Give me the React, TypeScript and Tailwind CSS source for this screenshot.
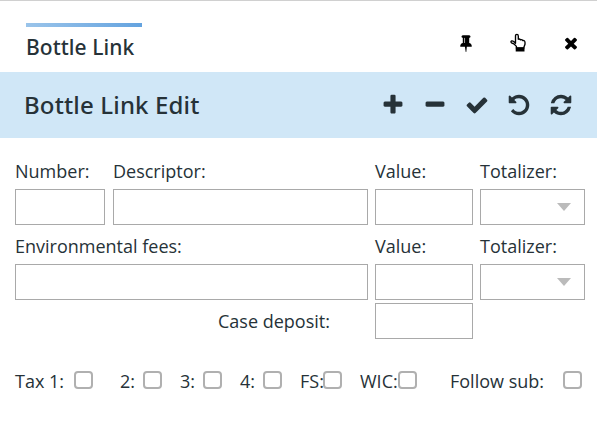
const paths = {
  tack: "M800 864v-448q0-14-9-23t-23-9-23 9-9 23v448q0 14 9 23t23 9 23-9 9-23zm672 352q0 26-19 45t-45 19h-429l-51 483q-2 12-10.500 20.500t-20.500 8.500h-1q-27 0-32-27l-76-485h-404q-26 0-45-19t-19-45q0-123 78.500-221.500t177.500-98.500v-512q-52 0-90-38t-38-90 38-90 90-38h640q52 0 90 38t38 90-38 90-90 38v512q99 0 177.500 98.500t78.500 221.500z",
  times: "M1490 1322q0 40-28 68l-136 136q-28 28-68 28t-68-28l-294-294-294 294q-28 28-68 28t-68-28l-136-136q-28-28-28-68t28-68l294-294-294-294q-28-28-28-68t28-68l136-136q28-28 68-28t68 28l294 294 294-294q28-28 68-28t68 28l136 136q28 28 28 68t-28 68l-294 294 294 294q28 28 28 68z",
  plus: "M1600 736v192q0 40-28 68t-68 28h-416v416q0 40-28 68t-68 28h-192q-40 0-68-28t-28-68v-416h-416q-40 0-68-28t-28-68v-192q0-40 28-68t68-28h416v-416q0-40 28-68t68-28h192q40 0 68 28t28 68v416h416q40 0 68 28t28 68z",
  minus: "M1600 736v192q0 40-28 68t-68 28h-1216q-40 0-68-28t-28-68v-192q0-40 28-68t68-28h1216q40 0 68 28t28 68z",
  check: "M1671 566q0 40-28 68l-724 724-136 136q-28 28-68 28t-68-28l-136-136-362-362q-28-28-28-68t28-68l136-136q28-28 68-28t68 28l294 295 656-657q28-28 68-28t68 28l136 136q28 28 28 68z",
  undo: "M1664 896q0 156-61 298t-164 245-245 164-298 61q-172 0-327-72.500t-264-204.500q-7-10-6.500-22.500t8.500-20.500l137-138q10-9 25-9 16 2 23 12 73 95 179 147t225 52q104 0 198.500-40.500t163.500-109.500 109.500-163.500 40.500-198.500-40.500-198.500-109.500-163.500-163.500-109.500-198.500-40.500q-98 0-188 35.500t-160 101.500l137 138q31 30 14 69-17 40-59 40h-448q-26 0-45-19t-19-45v-448q0-42 40-59 39-17 69 14l130 129q107-101 244.500-156.500t284.500-55.500q156 0 298 61t245 164 164 245 61 298z",
  refresh: "M1639 1056q0 5-1 7-64 268-268 434.500t-478 166.500q-146 0-282.500-55t-243.500-157l-129 129q-19 19-45 19t-45-19-19-45v-448q0-26 19-45t45-19h448q26 0 45 19t19 45-19 45l-137 137q71 66 161 102t187 36q134 0 250-65t186-179q11-17 53-117 8-23 30-23h192q13 0 22.500 9.500t9.500 22.500zm25-800v448q0 26-19 45t-45 19h-448q-26 0-45-19t-19-45 19-45l138-138q-148-137-349-137-134 0-250 65t-186 179q-11 17-53 117-8 23-30 23h-199q-13 0-22.500-9.500t-9.500-22.500v-7q65-268 270-434.500t480-166.500q146 0 284 55.500t245 156.500l130-129q19-19 45-19t45 19 19 45z",
};

function Icon({ name, className }: { name: keyof typeof paths; className: string }) {
  return (
    <svg viewBox="0 0 1792 1792" fill="currentColor" className={className}>
      <path d={paths[name]} />
    </svg>
  );
}

// Pointing hand with a solid cuff
function HandIcon() {
  return (
    <svg viewBox="0 0 18 18" className="size-[18px] overflow-visible" fill="none" stroke="currentColor" strokeWidth="1.35" strokeLinejoin="round" strokeLinecap="round">
      <path d="M6.500 9.300V1.900Q6.500 .4 7.900 .4T9.300 1.900V5.200Q10.600 4.700 11.500 5.800Q12.900 5.300 13.800 6.500Q16 6.200 16 8.600V10.200L14.900 13.200V14H7.400V12.400L5.300 10.200L2.500 8.900Q1.400 7.700 2.500 7Q3.500 6.600 4.700 7.600L6.500 8.900" />
      <path d="M6.700 13.500h8.800v4H6.700z" fill="currentColor" stroke="none" />
    </svg>
  );
}

function Box({ label }: { label: string }) {
  return (
    <div className="flex flex-col">
      <span className="h-[30px] whitespace-nowrap leading-[24px]">{label}</span>
      <div className="h-9 border border-[#a9a9a9]" />
    </div>
  );
}

function Select({ label }: { label: string }) {
  return (
    <div className="flex flex-col">
      <span className="h-[30px] whitespace-nowrap leading-[24px]">{label}</span>
      <div className="flex h-9 items-center justify-end border border-[#a9a9a9] pr-[13px]">
        <div className="h-0 w-0 border-x-[7px] border-t-[8px] border-x-transparent border-t-[#bbb]" />
      </div>
    </div>
  );
}

function Check({ label, className, gap }: { label: string; className: string; gap: string }) {
  return (
    <label className={`flex shrink-0 items-center ${className}`}>
      <span className={`shrink-0 whitespace-nowrap ${gap}`}>{label}</span>
      <span className="-mt-[2px] h-[18px] w-[19px] shrink-0 rounded-[4px] border-2 border-[#b0b0b0]" />
    </label>
  );
}

export default function App() {
  return (
    <div className="h-[442px] w-[597px] overflow-hidden border-t border-[#d0d0d0] bg-white font-['Open_Sans',sans-serif] text-[18px] text-[#263238]">
      <div className="flex h-[71px] justify-between">
        <div className="ml-[26px] mt-[22px] w-[116px]">
          <div className="h-1 bg-linear-to-r from-[#9ac4ea] to-[#64a3df]" />
          <div className="whitespace-nowrap pt-[7px] font-['Noto_Sans',sans-serif] text-[21px] font-medium leading-[27px] tracking-[0.05px]">Bottle Link</div>
        </div>
        <div className="mr-[17px] mt-[33px] flex h-[18px] gap-[35px] text-black">
          <Icon name="tack" className="-mr-px size-[18px]" />
          <HandIcon />
          <Icon name="times" className="size-[18px]" />
        </div>
      </div>
      <div className="flex h-[66px] items-center justify-between bg-[#d0e7f7] pl-6 pr-6">
        <h1 className="font-['Noto_Sans',sans-serif] text-[24px] font-medium tracking-[0.15px]">Bottle Link Edit</h1>
        <div className="flex gap-[18px]">
          <Icon name="plus" className="size-6" />
          <Icon name="minus" className="size-6" />
          <Icon name="check" className="size-6" />
          <Icon name="undo" className="size-6" />
          <Icon name="refresh" className="size-6" />
        </div>
      </div>
      <div className="ml-[15px] mt-[21px] grid w-[570px] grid-cols-[91px_255px_98px_105px] gap-x-[7px] [&>*:first-child]:mr-px">
        <Box label="Number:" />
        <Box label="Descriptor:" />
        <Box label="Value:" />
        <Select label="Totalizer:" />
      </div>
      <div className="ml-[15px] mt-[9px] grid w-[570px] grid-cols-[353px_98px_105px] gap-x-[7px]">
        <Box label="Environmental fees:" />
        <Box label="Value:" />
        <Select label="Totalizer:" />
      </div>
      <div className="mt-[3px] flex h-9 items-center">
        <span className="w-[375px] whitespace-nowrap pl-[218px]">Case deposit:</span>
        <div className="h-9 w-[98px] border border-[#a9a9a9]" />
      </div>
      <div className="ml-[15px] mt-[29px] flex h-[26px]">
        <Check label="Tax 1:" gap="w-[59px]" className="w-[105px]" />
        <Check label="2:" gap="w-[23px]" className="w-[60px]" />
        <Check label="3:" gap="w-[23px]" className="w-[60px]" />
        <Check label="4:" gap="w-[23px]" className="w-[60px]" />
        <Check label="FS:" gap="w-[23px]" className="w-[60px]" />
        <Check label="WIC:" gap="w-[38px]" className="w-[90px]" />
        <Check label="Follow sub:" gap="w-[113px]" className="w-[132px]" />
      </div>
    </div>
  );
}
